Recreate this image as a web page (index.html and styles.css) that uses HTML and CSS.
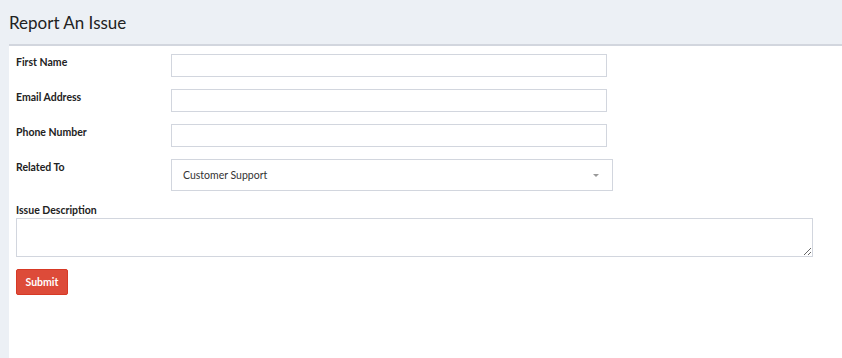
FILE: index.html
```html
<!DOCTYPE html>
<html lang="en">
<head>
  <meta charset="UTF-8" />
  <title>Report An Issue</title>
  <link rel="stylesheet" href="styles.css">
</head>
<body>
  <div class="page-header">
    <h1>Report An Issue</h1>
  </div>
  <div class="panel">
    <form class="issue-form">
      <div class="form-row">
        <label>First Name</label>
        <input type="text" class="field" />
      </div>
      <div class="form-row">
        <label>Email Address</label>
        <input type="text" class="field" />
      </div>
      <div class="form-row">
        <label>Phone Number</label>
        <input type="text" class="field" />
      </div>
      <div class="form-row">
        <label>Related To</label>
        <div class="select-box">
          <span>Customer Support</span>
          <span class="caret"></span>
        </div>
      </div>
      <div class="form-block">
        <label>Issue Description</label>
        <textarea class="desc"></textarea>
      </div>
      <button type="button" class="btn-submit">Submit</button>
    </form>
  </div>
</body>
</html>
```

FILE: styles.css
```css
body {
  margin: 0;
  font-family: Lato, "Noto Sans", sans-serif;
  background-color: #ecf0f5;
  color: #333;
  height: 100vh;
  display: flex;
  flex-direction: column;
}

.page-header {
  height: 44px;
  padding: 0 9px;
  display: flex;
  align-items: center;
}

.page-header h1 {
  margin: 0;
  font-size: 17px;
  font-weight: 400;
  color: #222;
}

.panel {
  flex: 1;
  margin-left: 9px;
  background-color: #fff;
  border-top: 2px solid #d2d6de;
  padding: 8px 7px;
}

.form-row {
  display: flex;
  align-items: flex-start;
  margin-bottom: 12px;
}

.form-row label,
.form-block label {
  width: 155px;
  font-size: 10.5px;
  font-weight: 700;
  color: #222;
  line-height: 14px;
  padding-top: 1px;
}

.field {
  box-sizing: border-box;
  width: 436px;
  height: 23px;
  border: 1px solid #d2d6de;
  margin: 0;
  padding: 0 8px;
}

.select-box {
  box-sizing: border-box;
  width: 442px;
  height: 32px;
  border: 1px solid #d2d6de;
  display: flex;
  align-items: center;
  justify-content: space-between;
  padding: 0 13px 0 11px;
  font-size: 10.5px;
  color: #333;
}

.caret {
  width: 0;
  height: 0;
  border-left: 3.5px solid transparent;
  border-right: 3.5px solid transparent;
  border-top: 3.5px solid #999;
}

.form-block {
  margin-bottom: 12px;
}

.form-block label {
  display: block;
  width: auto;
  padding-top: 0;
  margin-bottom: 1px;
}

.desc {
  display: block;
  box-sizing: border-box;
  width: 797px;
  height: 39px;
  border: 1px solid #d2d6de;
  margin: 0;
  resize: vertical;
}

.btn-submit {
  width: 52px;
  height: 26px;
  background-color: #dd4b39;
  border: 1px solid #d73925;
  border-radius: 2px;
  color: #fff;
  font-family: inherit;
  font-size: 10.5px;
  font-weight: 700;
  padding: 0;
  cursor: pointer;
}
```
